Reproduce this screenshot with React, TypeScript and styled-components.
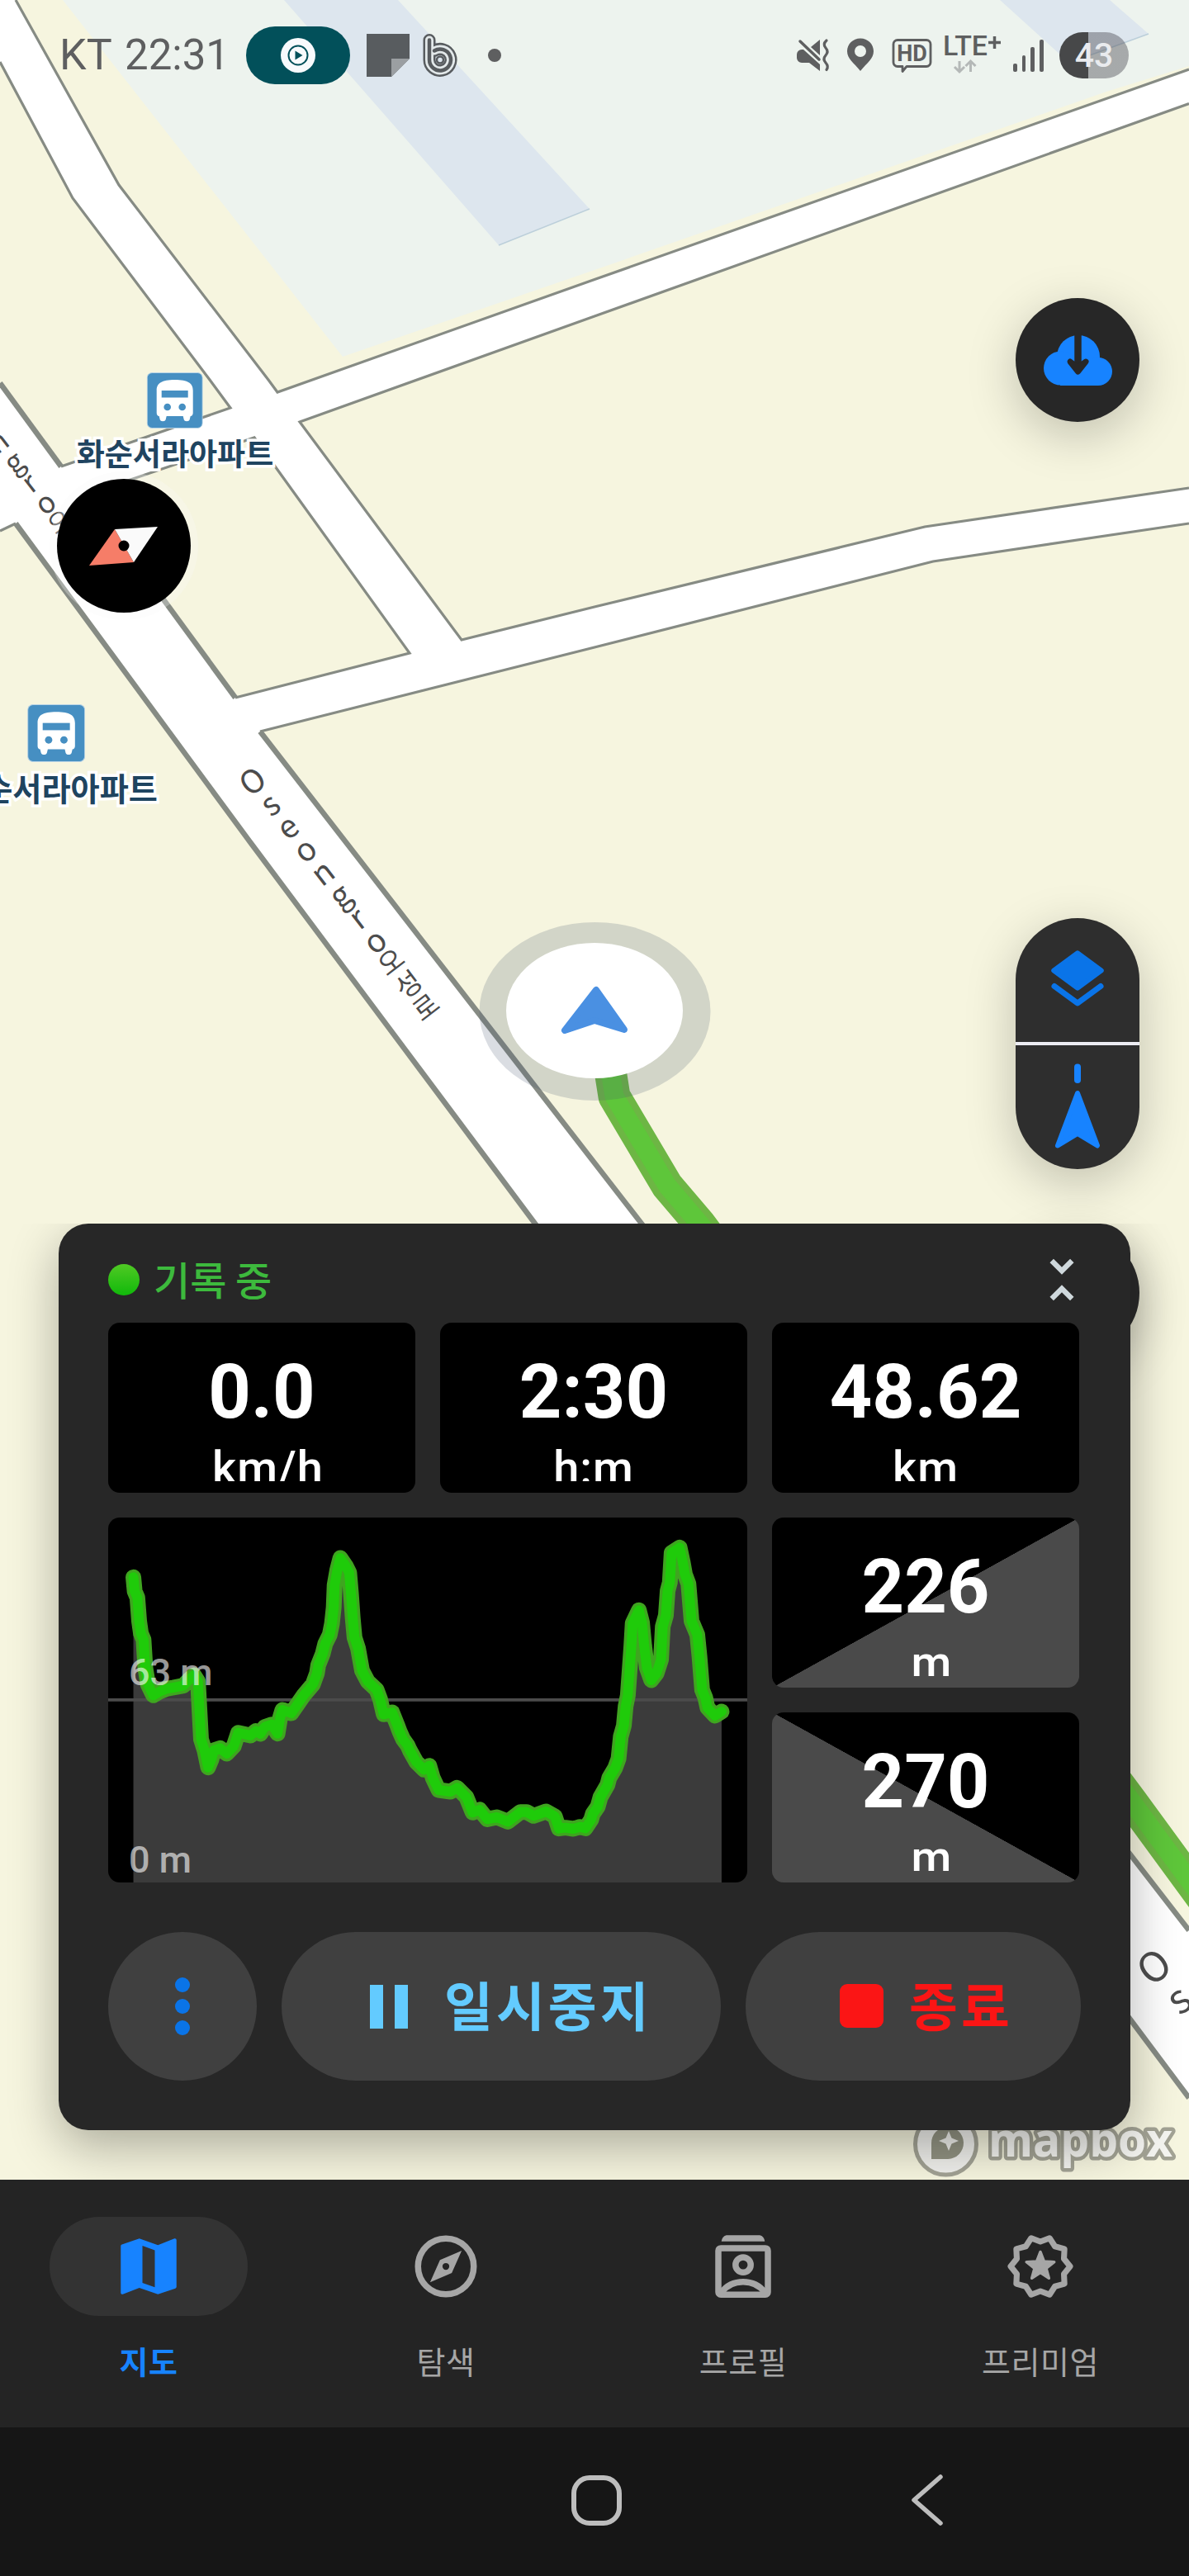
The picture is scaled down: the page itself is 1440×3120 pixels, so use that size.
import React from "react";
import styled, { createGlobalStyle } from "styled-components";

const EDGE = "#868b84";
const LAND = "#f6f5df";
const GREY = "#a6a6a6";
const BLUE = "#1783ff";
const STATUS = "#5e5f60";

// elevation samples along the recorded track
const TRACK: number[][] = [
  [115, 271], [118, 322], [124, 345], [128, 430], [132, 475], [138, 498], [142, 600], [148, 660],
  [160, 700], [176, 685], [190, 676], [205, 672], [228, 665], [240, 645], [252, 627], [261, 650],
  [264, 740], [268, 860], [276, 900], [284, 962], [291, 935], [297, 900], [311, 892], [326, 912],
  [342, 885], [352, 836], [380, 846], [392, 830], [402, 840], [412, 815], [428, 806], [441, 839],
  [447, 780], [452, 753], [472, 765], [485, 735], [500, 700], [521, 660], [530, 620], [533, 590],
  [543, 550], [549, 512], [559, 480], [564, 440], [568, 380], [570, 300], [576, 245], [583, 201],
  [596, 232], [603, 255], [607, 330], [611, 420], [615, 490], [623, 530], [632, 610], [645, 650],
  [665, 680], [673, 715], [681, 769], [700, 762], [712, 810], [717, 832], [725, 860], [735, 882],
  [740, 900], [755, 943], [772, 970], [784, 956], [792, 1000], [805, 1044], [832, 1050], [847, 1036],
  [868, 1070], [882, 1126], [898, 1116], [915, 1150], [937, 1143], [962, 1159], [990, 1124],
  [1004, 1124], [1020, 1138], [1048, 1122], [1068, 1140], [1077, 1184], [1092, 1181], [1110, 1185],
  [1125, 1178], [1137, 1183], [1150, 1152], [1154, 1130], [1165, 1105], [1171, 1070], [1187, 1025],
  [1191, 1000], [1204, 965], [1212, 930], [1217, 850], [1224, 810], [1228, 740], [1233, 700],
  [1237, 610], [1241, 520], [1244, 438], [1258, 391], [1265, 435], [1270, 520], [1276, 600],
  [1286, 645], [1298, 620], [1308, 570], [1312, 450], [1319, 410], [1323, 320], [1328, 290],
  [1332, 182], [1350, 163], [1357, 215], [1362, 260], [1370, 295], [1377, 430], [1390, 480],
  [1395, 560], [1401, 680], [1408, 708], [1413, 745], [1430, 774], [1445, 759],
];
const trackPoints = TRACK.map((p) => p.join(",")).join(" ");

const starPoints = (tips: number, outer: number, inner: number, start: number): string => {
  const pts: string[] = [];
  for (let i = 0; i < tips * 2; i++) {
    const r = i % 2 === 0 ? outer : inner;
    const a = ((start + (i * 180) / tips) * Math.PI) / 180;
    pts.push(`${(12 + r * Math.cos(a)).toFixed(2)},${(12 + r * Math.sin(a)).toFixed(2)}`);
  }
  return pts.join(" ");
};

const MapDrawing = () => (
  <MapSvg viewBox="0 0 1440 2640">
    <rect width="1440" height="2640" fill="#ffffff" />
    <g fill={LAND}>
      <polygon points="0,75 88,240 254,460 279,494 74,565 0,464" />
      <polygon points="19,0 144,224 325,460 336,475 720,338.5 1440,84 1440,0" />
      <polygon points="363,511 720,383 1440,125.5 1440,591 1120,638 720,735 559,775" />
      <polygon points="105,599 308,530 496,791 285,845" />
      <polygon points="0,643 19,634 303,1020 648,1482 1440,2541 1440,2640 0,2640" />
      <polygon points="315,886 720,784 1130,680 1440,634 1440,2338 777,1482" />
    </g>
    <polygon points="76,0 415,432 720,327 1340,111 1440,80 1440,0" fill="#edf3ee" />
    <g fill="#dde6ee">
      <polygon points="344,0 604,297 714,253 482,0" />
      <polygon points="1211,0 1295,76 1391,41 1344,0" />
    </g>
    <path d="M604 297L714 253M1295 76l96-35" stroke="#bccfda" strokeWidth="1.5" fill="none" />
    <g fill="none" stroke={EDGE} strokeWidth="3.2">
      <polyline points="0,75 88,240 254,460 279,494 74,565" />
      <polyline points="19,0 144,224 325,460 336,475 720,338.5 1440,84" />
      <polyline points="1440,125.5 720,383 363,511 559,775 720,735 1120,638 1440,591" />
      <polyline points="105,599 308,530 496,791 285,845" />
      <polyline points="0,643 19,634" />
      <polyline points="315,886 720,784 1130,680 1440,634" />
    </g>
    <g fill="none" stroke={EDGE} strokeWidth="6.5">
      <polyline points="0,464 74,565" />
      <polyline points="105,599 285,845" />
      <polyline points="19,634 303,1020 648,1482 1440,2541" />
      <polyline points="315,886 777,1482 1440,2338" />
    </g>
    <g fill="none" strokeLinejoin="round">
      <polyline points="738,1290 744,1328 808,1436 848,1483 1369,2180 1470,2318" stroke="#6db644" strokeWidth="39" />
      <polyline points="738,1290 744,1328 808,1436 848,1483 1369,2180 1470,2318" stroke="#5ec63a" strokeWidth="23" />
    </g>
    <ellipse cx="720.5" cy="1225" rx="140" ry="108" fill="#46556e" fillOpacity="0.2" />
    <ellipse cx="720" cy="1224" rx="107" ry="82" fill="#ffffff" />
    <polygon
      points="722,1199 684,1248 720,1236 756,1247"
      fill="#4a90e2"
      stroke="#4a90e2"
      strokeWidth="8"
      strokeLinejoin="round"
    />
    <circle cx="1145.5" cy="2597" r="37" fill="#f0f0ec" stroke="#a2a294" strokeWidth="5" />
    <path d="M1128 2615v-19a19.5 19.5 0 1 1 20 19z" fill="#929382" />
    <path d="M1149 2581l3.500 8.500 8.500 3.500-8.500 3.500-3.500 8.500-3.500-8.500-8.500-3.500 8.500-3.500z" fill="#f0f0ec" />
    <LogoText x="1197" y="2612" textLength="223" lengthAdjust="spacingAndGlyphs">
      mapbox
    </LogoText>
  </MapSvg>
);

const BusIcon = () => (
  <svg viewBox="0 0 68 68">
    <rect x="0.5" y="0.5" width="67" height="67" rx="6" fill="#468fc2" stroke="#b9d4e6" />
    <path
      d="M12 22c0-9 6-13 22-13s22 4 22 13v27c0 2-1 4-3 4l-1 4c-.6 3-6.400 3-7 0l-1-4H24l-1 4c-.6 3-6.400 3-7 0l-1-4c-2 0-3-2-3-4z"
      fill="#ffffff"
    />
    <rect x="18" y="22" width="32" height="8.5" fill="#468fc2" />
    <circle cx="25" cy="42" r="4.3" fill="#468fc2" />
    <circle cx="43" cy="42" r="4.3" fill="#468fc2" />
  </svg>
);

const StatusIcons = () => (
  <svg width="262" height="50" viewBox="962 43 262 50">
    <g fill={STATUS}>
      <path d="M973 61l20 18v8l-13-10h-9a6 6 0 0 1-6-6v-4a6 6 0 0 1 6-6z" />
      <path d="M982 58l11-9v19z" />
      <path d="M1042 47.500c-9 0-16 7-16 15.500 0 9 8 14 16 24 8-10 16-15 16-24 0-8.500-7-15.500-16-15.500zm0 8.500a7 7 0 1 1 0 14 7 7 0 0 1 0-14z" />
    </g>
    <path d="M969 51l23 22" stroke={STATUS} strokeWidth="3.5" strokeLinecap="round" />
    <path
      d="M1001 50q-5 4.500-1 9t0 9 0 9 1 8.500"
      stroke={STATUS}
      strokeWidth="3.2"
      fill="none"
      strokeLinecap="round"
    />
    <path
      d="M1087 49.500h35a5 5 0 0 1 5 5v22a5 5 0 0 1-5 5h-24l-5 6v-6h-6a5 5 0 0 1-5-5v-22a5 5 0 0 1 5-5z"
      stroke={STATUS}
      strokeWidth="2.8"
      fill="none"
      strokeLinejoin="round"
    />
    <HdText x="1104.5" y="75">HD</HdText>
    <LteText x="1142" y="68" textLength="54" lengthAdjust="spacingAndGlyphs">LTE</LteText>
    <path d="M1197 52.500h15M1204.500 45v15" stroke={STATUS} strokeWidth="3.5" />
    <path
      d="M1162 75v12M1156 82l6 6 6-6M1175.500 88V76M1169.500 81l6-6 6 6"
      stroke="#b4b8b7"
      strokeWidth="3"
      fill="none"
    />
  </svg>
);

const MapTabIcon = () => (
  <svg viewBox="0 0 24 24" fill="currentColor" fillRule="evenodd">
    <path d="M20.500 3l-.16.03L15 5.100 9 3 3.360 4.900c-.21.07-.36.250-.36.480V20.500c0 .28.220.5.5.5l.16-.03L9 18.900l6 2.100 5.640-1.900c.21-.07.36-.250.36-.48V3.500c0-.28-.22-.5-.5-.5zM14 18.700l-4-1.400V5.300l4 1.500z" />
  </svg>
);

const ExploreIcon = () => (
  <svg viewBox="0 0 24 24" fill="currentColor">
    <circle cx="12" cy="12" r="9" fill="none" stroke="currentColor" strokeWidth="2" />
    <path
      fillRule="evenodd"
      d="M17.100 6.900L13.900 14.100 6.900 17.100 10.100 9.900zM12 10.900a1.100 1.100 0 1 0 0 2.200 1.100 1.100 0 0 0 0-2.200z"
    />
  </svg>
);

const ProfileIcon = () => (
  <svg viewBox="0 0 24 24" fill="none" stroke="currentColor" strokeWidth="2">
    <path d="M5 3.900c.2-1.300.9-2 2-2h10c1.100 0 1.800.7 2 2z" fill="currentColor" stroke="none" />
    <rect x="4" y="6.1" width="16" height="15" rx="0.8" />
    <circle cx="12" cy="11.5" r="2.45" />
    <path d="M5 20.400C6.800 18 9.300 17 12 17s5.200 1 7 3.400" />
  </svg>
);

const PremiumIcon = () => (
  <svg viewBox="0 0 24 24" stroke="currentColor" strokeLinejoin="round">
    <polygon points={starPoints(10, 9.6, 8, 0)} fill="none" strokeWidth="1.9" />
    <polygon points={starPoints(5, 4.7, 2, -90)} fill="currentColor" strokeWidth="0.9" />
  </svg>
);

interface MetricProps {
  value: string;
  unit: string;
  slope?: "up" | "down";
}
const Metric: React.FC<MetricProps> = ({ value, unit, slope }: MetricProps) => (
  <MetricCell $slope={slope}>
    <MetricBody>
      <MetricValue>{value}</MetricValue>
      <MetricUnit>{unit}</MetricUnit>
    </MetricBody>
  </MetricCell>
);

interface RoadLabelProps {
  x: number;
  y: number;
  pitch: number;
  size: number;
  latin: string;
  hangul?: string;
}
const RoadLabel: React.FC<RoadLabelProps> = ({ x, y, pitch, size, latin, hangul }: RoadLabelProps) => (
  <RoadName $x={x} $y={y} $pitch={pitch} $size={size}>
    <span>{latin}</span>
    {hangul}
  </RoadName>
);

const TABS = [
  { name: "지도", icon: <MapTabIcon />, active: true },
  { name: "탐색", icon: <ExploreIcon />, active: false },
  { name: "프로필", icon: <ProfileIcon />, active: false },
  { name: "프리미엄", icon: <PremiumIcon />, active: false },
];

const App = () => {
  return (
    <>
      <GlobalStyle />
      <Screen>
        <MapArea>
          <MapDrawing />
          <RoadLabel x={-4} y={533} pitch={31.3} size={35} latin="ngro" hangul="오" />
          <RoadLabel x={304} y={944} pitch={34.8} size={38.5} latin="Oseongro" hangul="오성로" />
          <RoadLabel x={1397} y={2381} pitch={49} size={49} latin="Os" />
          <Poi $x={212} $y={451} $size={68}>
            <BusIcon />
            <PoiName>화순서라아파트</PoiName>
          </Poi>
          <Poi $x={68} $y={853} $size={70}>
            <BusIcon />
            <PoiName>화순서라아파트</PoiName>
          </Poi>
          <CompassButton>
            <svg width="162" height="162" viewBox="69 580 162 162">
              <polygon points="108,685 139,641 162,681" fill="#f67d68" />
              <polygon points="139,641 191,638 162,681" fill="#fafafa" />
              <circle cx="150" cy="661" r="6.5" />
            </svg>
          </CompassButton>

          <StatusBar>
            <StatusLeft>
              <Carrier>KT</Carrier>
              <Clock>22:31</Clock>
              <MediaPill>
                <svg width="42" height="42" viewBox="0 0 42 42">
                  <circle cx="21" cy="21" r="21" fill="#f8fafc" />
                  <circle cx="21" cy="21" r="11.5" fill="none" stroke="#02505a" strokeWidth="2" />
                  <path d="M17.500 15.500v11l9-5.500z" fill="#02505a" />
                </svg>
              </MediaPill>
              <svg width="110" height="52" viewBox="444 41 110 52">
                <path d="M444 41h52v30l-22 22h-30z" fill="#585c5f" />
                <path d="M474 71h22l-22 22z" fill="#9b9fa2" />
                <g fill="none" strokeLinecap="round">
                  <path d="M520 48.500v24a13 13 0 1 0 6-11" stroke="#585c5f" strokeWidth="15" />
                  <path d="M520 48.500v24a13 13 0 1 0 6-11" stroke="#e3e9ea" strokeWidth="10" />
                  <path d="M520 48.500v24a13 13 0 1 0 6-11" stroke="#585c5f" strokeWidth="4.5" />
                </g>
                <circle cx="533" cy="72.5" r="4" fill="none" stroke="#585c5f" strokeWidth="2.5" />
              </svg>
              <MoreDot />
            </StatusLeft>
            <StatusRight>
              <StatusIcons />
              <Signal>
                <i />
                <i />
                <i />
                <i />
              </Signal>
              <Battery>43</Battery>
            </StatusRight>
          </StatusBar>

          <FloatButton $top={361} $height={150}>
            <svg width="150" height="150" viewBox="1230 361 150 150">
              <g fill={BLUE}>
                <circle cx="1306" cy="432" r="26" />
                <circle cx="1284.5" cy="446" r="20.5" />
                <circle cx="1330" cy="450" r="17" />
                <rect x="1284" y="440" width="46" height="27" />
              </g>
              <path d="M1305.500 402v44" stroke="#272727" strokeWidth="8.5" />
              <path
                d="M1296 438l9.500 12 9.500-12-9.500 7z"
                stroke="#272727"
                strokeWidth="7"
                fill="#272727"
                strokeLinecap="round"
                strokeLinejoin="round"
              />
            </svg>
          </FloatButton>
          <FloatButton $top={1112} $height={304} $tone="#2e2e2e">
            <svg width="150" height="150" viewBox="1230 1112 150 150">
              <polygon
                points="1305,1154.5 1333.5,1175.5 1305,1196.5 1276.5,1175.5"
                fill="#0a74e8"
                stroke="#0a74e8"
                strokeWidth="6.5"
                strokeLinejoin="round"
              />
              <path
                d="M1277 1194.500l28 20.500 28-20.500"
                fill="none"
                stroke="#0a74e8"
                strokeWidth="7"
                strokeLinecap="round"
                strokeLinejoin="round"
              />
            </svg>
            <FloatDivider />
            <svg width="150" height="150" viewBox="1230 1266 150 150">
              <rect x="1301" y="1288.5" width="8" height="23.5" rx="4" fill={BLUE} />
              <polygon
                points="1305,1324 1281,1387.5 1305,1373 1329,1387.5"
                fill={BLUE}
                stroke={BLUE}
                strokeWidth="6"
                strokeLinejoin="round"
              />
            </svg>
          </FloatButton>
          <FloatButton $top={1491} $height={150} $tone="#2a2a2a" />

          <Recorder>
            <RecorderHead>
              <RecordDot />
              <RecordState>기록 중</RecordState>
              <svg width="76" height="76" viewBox="0 0 24 24" fill="#cfd8dc">
                <path d="M7.410 18.590L8.830 20 12 16.830 15.170 20l1.410-1.410L12 14l-4.590 4.590zm9.180-13.180L15.170 4 12 7.170 8.830 4 7.410 5.410 12 10l4.590-4.590z" />
              </svg>
            </RecorderHead>
            <MetricGrid>
              <Metric value="0.0" unit=" km/h" />
              <Metric value="2:30" unit="h:m" />
              <Metric value="48.62" unit="km" />
              <Chart>
                <svg width="774" height="442" viewBox="58 54 1445 1326" preserveAspectRatio="none">
                  <polygon points={`115,1380 ${trackPoints} 1445,1380`} fill="#3b3b3b" />
                  <line x1="58" y1="716.5" x2="1503" y2="716.5" stroke="#4b4b4b" strokeWidth="11" />
                  <g fill="none" strokeLinecap="round" strokeLinejoin="round">
                    <polyline points={trackPoints} stroke="#3fa520" strokeWidth="19" vectorEffect="non-scaling-stroke" />
                    <polyline points={trackPoints} stroke="#1fcb0a" strokeWidth="12" vectorEffect="non-scaling-stroke" />
                  </g>
                </svg>
                <ChartLabel $top={166}>63 m</ChartLabel>
                <ChartLabel $top={393}>0 m</ChartLabel>
              </Chart>
              <Metric value="226" unit=" m" slope="up" />
              <Metric value="270" unit=" m" slope="down" />
            </MetricGrid>
            <Actions>
              <MoreButton>
                <i />
                <i />
                <i />
              </MoreButton>
              <PauseButton>
                <svg width="46" height="53" viewBox="0 0 46 53">
                  <path d="M0 0h16v53H0zM30 0h16v53H30z" fill="#63cbff" />
                </svg>
                <ActionName>일시중지</ActionName>
              </PauseButton>
              <StopButton>
                <StopSquare />
                <ActionName>종료</ActionName>
              </StopButton>
            </Actions>
          </Recorder>
        </MapArea>

        <TabBar>
          {TABS.map((tab) => (
            <Tab key={tab.name} $active={tab.active}>
              <TabPill $active={tab.active}>{tab.icon}</TabPill>
              {tab.name}
            </Tab>
          ))}
        </TabBar>
        <SystemNav>
          <HomeKey />
          <svg width="46" height="70" viewBox="0 0 46 70">
            <path
              d="M39 5L7 33l32 28"
              fill="none"
              stroke="#bdbdbd"
              strokeWidth="5.5"
              strokeLinecap="round"
              strokeLinejoin="round"
            />
          </svg>
        </SystemNav>
      </Screen>
    </>
  );
};

export default App;

const GlobalStyle = createGlobalStyle`
  body {
    margin: 0;
    font-family: Roboto, "Noto Sans CJK KR", sans-serif;
    background: #161616;
  }
  svg {
    display: block;
    flex: none;
  }
`;

const Screen = styled.div`
  width: 1440px;
  height: 3120px;
  display: flex;
  flex-direction: column;
  overflow: hidden;
`;

const MapArea = styled.div`
  position: relative;
  flex: 1;
  overflow: hidden;
`;

const MapSvg = styled.svg`
  position: absolute;
  inset: 0;
  width: 100%;
  height: 100%;
`;

const LogoText = styled.text`
  font-family: "Open Sans", "Noto Sans", sans-serif;
  font-weight: 700;
  font-size: 58px;
  fill: #f4f4f0;
  stroke: #a2a294;
  stroke-width: 9px;
  stroke-linejoin: round;
  paint-order: stroke;
`;

const HdText = styled.text`
  font-weight: 700;
  font-size: 27px;
  text-anchor: middle;
  fill: ${STATUS};
`;

const LteText = styled.text`
  font-weight: 500;
  font-size: 34px;
  fill: ${STATUS};
`;

const RoadName = styled.div<{ $x: number; $y: number; $pitch: number; $size: number }>`
  position: absolute;
  left: ${(p) => p.$x}px;
  top: ${(p) => p.$y - p.$pitch / 2}px;
  writing-mode: vertical-rl;
  text-orientation: upright;
  white-space: nowrap;
  line-height: 1;
  font-family: "Noto Sans CJK KR", sans-serif;
  font-size: ${(p) => p.$pitch * 0.95}px;
  letter-spacing: ${(p) => p.$pitch * 0.05}px;
  color: #4c4c4c;
  transform-origin: 50% ${(p) => p.$pitch / 2}px;
  transform: translateX(-50%) rotate(-37.5deg);
  span {
    font-size: ${(p) => p.$size}px;
    letter-spacing: ${(p) => p.$pitch - p.$size}px;
  }
`;

const Poi = styled.div<{ $x: number; $y: number; $size: number }>`
  position: absolute;
  left: ${(p) => p.$x}px;
  top: ${(p) => p.$y}px;
  transform: translateX(-50%);
  display: flex;
  flex-direction: column;
  align-items: center;
  gap: ${(p) => p.$size - 58}px;
  font-size: ${(p) => p.$size * 0.545}px;
  svg {
    width: ${(p) => p.$size}px;
    height: ${(p) => p.$size}px;
  }
`;

const PoiName = styled.div`
  font-family: "Noto Sans CJK KR", sans-serif;
  font-weight: 700;
  line-height: 38px;
  white-space: nowrap;
  color: #1f4460;
  -webkit-text-stroke: 7px #ffffff;
  paint-order: stroke fill;
`;

const CompassButton = styled.div`
  position: absolute;
  left: 69px;
  top: 580px;
  width: 162px;
  height: 162px;
  border-radius: 50%;
  background: #000000;
  box-shadow: 0 0 0 9px rgba(250, 250, 250, 0.3);
`;

const StatusBar = styled.div`
  position: relative;
  height: 134px;
  padding: 0 73px 0 72px;
  display: flex;
  align-items: center;
  justify-content: space-between;
`;

const StatusLeft = styled.div`
  display: flex;
  align-items: center;
  color: ${STATUS};
  font-size: 52px;
  line-height: 60px;
`;

const Carrier = styled.span`
  width: 79px;
`;

const Clock = styled.span`
  width: 147px;
  font-size: 51px;
`;

const MediaPill = styled.div`
  width: 126px;
  height: 70px;
  margin-right: 20px;
  border-radius: 35px;
  background: #02505a;
  display: flex;
  align-items: center;
  justify-content: center;
`;

const MoreDot = styled.div`
  width: 16px;
  height: 16px;
  margin-left: 37px;
  border-radius: 50%;
  background: ${STATUS};
`;

const StatusRight = styled.div`
  display: flex;
  align-items: center;
`;

const Signal = styled.div`
  display: flex;
  align-items: flex-end;
  gap: 6px;
  height: 40px;
  margin: 0 19px 0 3px;
  i {
    width: 4.8px;
    border-radius: 2px;
    background: ${STATUS};
  }
  i:nth-child(1) {
    height: 10px;
  }
  i:nth-child(2) {
    height: 20px;
  }
  i:nth-child(3) {
    height: 30px;
  }
  i:nth-child(4) {
    height: 39px;
  }
`;

const Battery = styled.div`
  width: 84px;
  height: 56px;
  border-radius: 28px;
  background: linear-gradient(to right, #474849 42%, rgba(80, 80, 88, 0.45) 42%);
  color: #e9ebee;
  font-size: 41px;
  font-weight: 500;
  line-height: 56px;
  text-align: center;
`;

const FloatButton = styled.div<{ $top: number; $height: number; $tone?: string }>`
  position: absolute;
  top: ${(p) => p.$top}px;
  right: 60px;
  width: 150px;
  height: ${(p) => p.$height}px;
  border-radius: 75px;
  background: ${(p) => p.$tone || "#272727"};
  box-shadow: 0 16px 60px rgba(0, 0, 0, 0.22);
`;

const FloatDivider = styled.div`
  height: 4px;
  background: #ececf2;
`;

const Recorder = styled.section`
  position: absolute;
  left: 71px;
  right: 71px;
  bottom: 60px;
  height: 1098px;
  box-sizing: border-box;
  padding: 0 60px 60px;
  border-radius: 36px;
  background: #272727;
  box-shadow: 0 20px 60px rgba(0, 0, 0, 0.3);
  clip-path: inset(0 -71px -60px -71px);
  display: flex;
  flex-direction: column;
`;

const RecorderHead = styled.div`
  height: 120px;
  padding-top: 15px;
  box-sizing: border-box;
  display: flex;
  align-items: center;
  margin-right: -15px;
  svg {
    margin-left: auto;
  }
`;

const RecordDot = styled.div`
  width: 38px;
  height: 38px;
  border-radius: 50%;
  background: linear-gradient(#50c924, #10b90a);
`;

const RecordState = styled.div`
  margin-left: 17px;
  padding-bottom: 4px;
  font-family: "Noto Sans CJK KR", sans-serif;
  font-size: 48px;
  font-weight: 500;
  line-height: 60px;
  color: #3dba3d;
`;

const MetricGrid = styled.div`
  display: grid;
  grid-template-columns: repeat(3, 372px);
  grid-auto-rows: 206px;
  gap: 30px;
`;

const slopes = {
  up: "linear-gradient(to bottom right, #000 50%, #4a4a4a 50.1%)",
  down: "linear-gradient(to top right, #4a4a4a 50%, #000 50.1%)",
};

const MetricCell = styled.div<{ $slope?: "up" | "down" }>`
  border-radius: 14px;
  background: ${(p) => (p.$slope ? slopes[p.$slope] : "#000")};
  overflow: hidden;
`;

const MetricBody = styled.div`
  height: 192px;
  overflow: hidden;
  display: flex;
  flex-direction: column;
  align-items: center;
  color: #ffffff;
`;

const MetricValue = styled.div`
  margin-top: 32px;
  font-size: 90px;
  font-weight: 700;
  line-height: 106px;
`;

const MetricUnit = styled.div`
  margin-top: 5px;
  font-size: 56px;
  font-weight: 500;
  line-height: 66px;
  letter-spacing: 1px;
  white-space: pre;
`;

const Chart = styled.div`
  position: relative;
  grid-column: span 2;
  grid-row: span 2;
  border-radius: 14px;
  background: #000000;
  overflow: hidden;
`;

const ChartLabel = styled.span<{ $top: number }>`
  position: absolute;
  left: 25px;
  top: ${(p) => p.$top}px;
  font-size: 45px;
  font-weight: 500;
  line-height: 44px;
  color: rgba(255, 255, 255, 0.62);
`;

const Actions = styled.div`
  margin-top: 60px;
  display: flex;
  gap: 30px;
`;

const ActionButton = styled.div`
  box-sizing: border-box;
  height: 180px;
  border-radius: 90px;
  background: #404040;
  display: flex;
  align-items: center;
`;

const ActionName = styled.div`
  padding-bottom: 9px;
  font-family: "Noto Sans CJK KR", sans-serif;
  font-size: 64px;
  font-weight: 700;
  line-height: 80px;
  letter-spacing: 4px;
  white-space: nowrap;
`;

const MoreButton = styled(ActionButton)`
  width: 180px;
  flex-direction: column;
  justify-content: center;
  gap: 8px;
  i {
    width: 18px;
    height: 18px;
    border-radius: 50%;
    background: #0a74e8;
  }
`;

const PauseButton = styled(ActionButton)`
  width: 532px;
  padding-left: 107px;
  gap: 44px;
  color: #63cbff;
`;

const StopButton = styled(ActionButton)`
  width: 406px;
  padding-left: 114px;
  gap: 31px;
  color: #fb1515;
`;

const StopSquare = styled.div`
  width: 53px;
  height: 53px;
  margin-bottom: 2px;
  border-radius: 9px;
  background: #fb1515;
`;

const TabBar = styled.nav`
  height: 300px;
  display: grid;
  grid-template-columns: repeat(4, 1fr);
  background: #242424;
`;

const Tab = styled.div<{ $active: boolean }>`
  padding-top: 45px;
  display: flex;
  flex-direction: column;
  align-items: center;
  gap: 31px;
  font-family: "Noto Sans CJK KR", sans-serif;
  font-size: 38px;
  font-weight: ${(p) => (p.$active ? 700 : 400)};
  line-height: 46px;
  letter-spacing: 0.5px;
  color: ${(p) => (p.$active ? BLUE : GREY)};
`;

const TabPill = styled.div<{ $active: boolean }>`
  width: 240px;
  height: 120px;
  border-radius: 60px;
  background: ${(p) => (p.$active ? "#333333" : "transparent")};
  display: flex;
  align-items: center;
  justify-content: center;
  svg {
    width: 90px;
    height: 90px;
  }
`;

const SystemNav = styled.div`
  height: 180px;
  display: grid;
  grid-template-columns: repeat(3, 403px);
  justify-content: center;
  align-items: center;
  justify-items: center;
  background: #161616;
`;

const HomeKey = styled.div`
  grid-column: 2;
  box-sizing: border-box;
  width: 61px;
  height: 61px;
  margin: 0 0 4px 4px;
  border: 6px solid #bdbdbd;
  border-radius: 22px;
`;
